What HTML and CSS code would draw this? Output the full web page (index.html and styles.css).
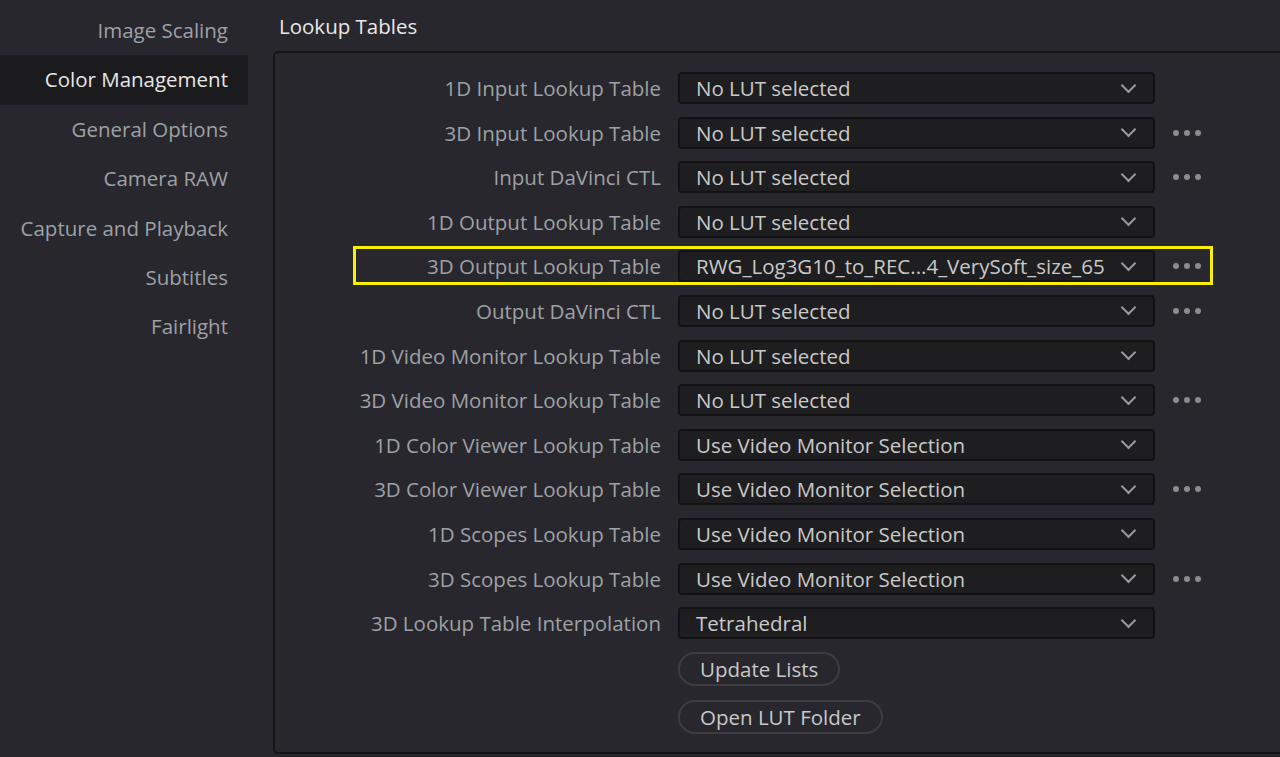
FILE: index.html
```html
<!DOCTYPE html>
<html lang="en">
	<head>
		<meta charset="utf-8" />
		<title>Project Settings - Color Management</title>
		<link rel="stylesheet" href="styles.css">
	</head>
	<body>
		<div id="settings">
			<ul class="sidebar">
				<li>Image Scaling</li>
				<li class="active">Color Management</li>
				<li>General Options</li>
				<li>Camera RAW</li>
				<li>Capture and Playback</li>
				<li>Subtitles</li>
				<li>Fairlight</li>
			</ul>
			<div class="main">
				<h2 class="section-title">Lookup Tables</h2>
				<div class="panel">
					<div class="row">
						<label>1D Input Lookup Table</label>
						<div class="select"><span>No LUT selected</span><i class="chev"></i></div>
					</div>
					<div class="row">
						<label>3D Input Lookup Table</label>
						<div class="select"><span>No LUT selected</span><i class="chev"></i></div>
						<div class="more"><b></b><b></b><b></b></div>
					</div>
					<div class="row">
						<label>Input DaVinci CTL</label>
						<div class="select"><span>No LUT selected</span><i class="chev"></i></div>
						<div class="more"><b></b><b></b><b></b></div>
					</div>
					<div class="row">
						<label>1D Output Lookup Table</label>
						<div class="select"><span>No LUT selected</span><i class="chev"></i></div>
					</div>
					<div class="row">
						<div class="highlight"></div>
						<label>3D Output Lookup Table</label>
						<div class="select"><span>RWG_Log3G10_to_REC...4_VerySoft_size_65</span><i class="chev"></i></div>
						<div class="more"><b></b><b></b><b></b></div>
					</div>
					<div class="row">
						<label>Output DaVinci CTL</label>
						<div class="select"><span>No LUT selected</span><i class="chev"></i></div>
						<div class="more"><b></b><b></b><b></b></div>
					</div>
					<div class="row">
						<label>1D Video Monitor Lookup Table</label>
						<div class="select"><span>No LUT selected</span><i class="chev"></i></div>
					</div>
					<div class="row">
						<label>3D Video Monitor Lookup Table</label>
						<div class="select"><span>No LUT selected</span><i class="chev"></i></div>
						<div class="more"><b></b><b></b><b></b></div>
					</div>
					<div class="row">
						<label>1D Color Viewer Lookup Table</label>
						<div class="select"><span>Use Video Monitor Selection</span><i class="chev"></i></div>
					</div>
					<div class="row">
						<label>3D Color Viewer Lookup Table</label>
						<div class="select"><span>Use Video Monitor Selection</span><i class="chev"></i></div>
						<div class="more"><b></b><b></b><b></b></div>
					</div>
					<div class="row">
						<label>1D Scopes Lookup Table</label>
						<div class="select"><span>Use Video Monitor Selection</span><i class="chev"></i></div>
					</div>
					<div class="row">
						<label>3D Scopes Lookup Table</label>
						<div class="select"><span>Use Video Monitor Selection</span><i class="chev"></i></div>
						<div class="more"><b></b><b></b><b></b></div>
					</div>
					<div class="row">
						<label>3D Lookup Table Interpolation</label>
						<div class="select"><span>Tetrahedral</span><i class="chev"></i></div>
					</div>
					<div class="buttons">
						<button>Update Lists</button>
						<button>Open LUT Folder</button>
					</div>
				</div>
			</div>
		</div>
	</body>
</html>
```
FILE: styles.css
```css
body {
	margin: 0;
	background: #28272d;
	font-family: "Open Sans", "Noto Sans", sans-serif;
	font-size: 20.5px;
	color: #9ea1a6;
	height: 757px;
	overflow: hidden;
}
#settings {
	display: flex;
	height: 757px;
}

/* left list */
.sidebar {
	list-style: none;
	margin: 0;
	padding: 6px 0 0 0;
	width: 248px;
	flex: none;
}
.sidebar li {
	height: 49.4px;
	line-height: 49.4px;
	text-align: right;
	padding-right: 20px;
	white-space: nowrap;
}
.sidebar li.active {
	background: #1b1b1e;
	color: #e6e6e6;
}

/* right side */
.main {
	margin-left: 25px;
	flex: 1;
	display: flex;
	flex-direction: column;
}
.section-title {
	margin: 0;
	padding: 10px 0 0 6px;
	height: 51px;
	font-size: 20.5px;
	font-weight: normal;
	color: #e8e8e8;
	line-height: 32px;
	box-sizing: border-box;
}
.panel {
	margin-right: -20px;
	height: 703px;
	box-sizing: border-box;
	border: 2px solid #141416;
	border-radius: 5px;
	padding: 19px 0 0 16px;
}
.row {
	position: relative;
	display: flex;
	align-items: center;
	height: 32px;
	margin-bottom: 12.6px;
}
.row label {
	width: 370px;
	text-align: right;
	white-space: nowrap;
	margin-right: 17px;
}
.select {
	width: 477px;
	height: 32px;
	box-sizing: border-box;
	background: #1e1e20;
	border: 2px solid #121214;
	border-radius: 4px;
	display: flex;
	align-items: center;
	justify-content: space-between;
	padding: 0 17px 0 16px;
	color: #c9c9c9;
	white-space: nowrap;
}
.chev {
	width: 9px;
	height: 9px;
	border-right: 2px solid #9a9a9a;
	border-bottom: 2px solid #9a9a9a;
	transform: rotate(45deg);
	margin-top: -6px;
	margin-right: 2px;
}
.more {
	display: flex;
	gap: 5px;
	margin-left: 18px;
}
.more b {
	width: 6px;
	height: 6px;
	border-radius: 50%;
	background: #8c8c8e;
}
.highlight {
	position: absolute;
	left: 62px;
	top: -4px;
	width: 860px;
	height: 39px;
	box-sizing: border-box;
	border: 3px solid #f8f000;
}
.buttons {
	margin-left: 387px;
	margin-top: 1.4px;
	display: flex;
	flex-direction: column;
	align-items: flex-start;
	gap: 14px;
}
button {
	font-family: "Open Sans", "Noto Sans", sans-serif;
	font-size: 20.5px;
	color: #c9c9c9;
	background: #28272d;
	border: 2px solid #3c3c41;
	border-radius: 17px;
	height: 34px;
	padding: 0 20px;
	line-height: 28px;
}
```
